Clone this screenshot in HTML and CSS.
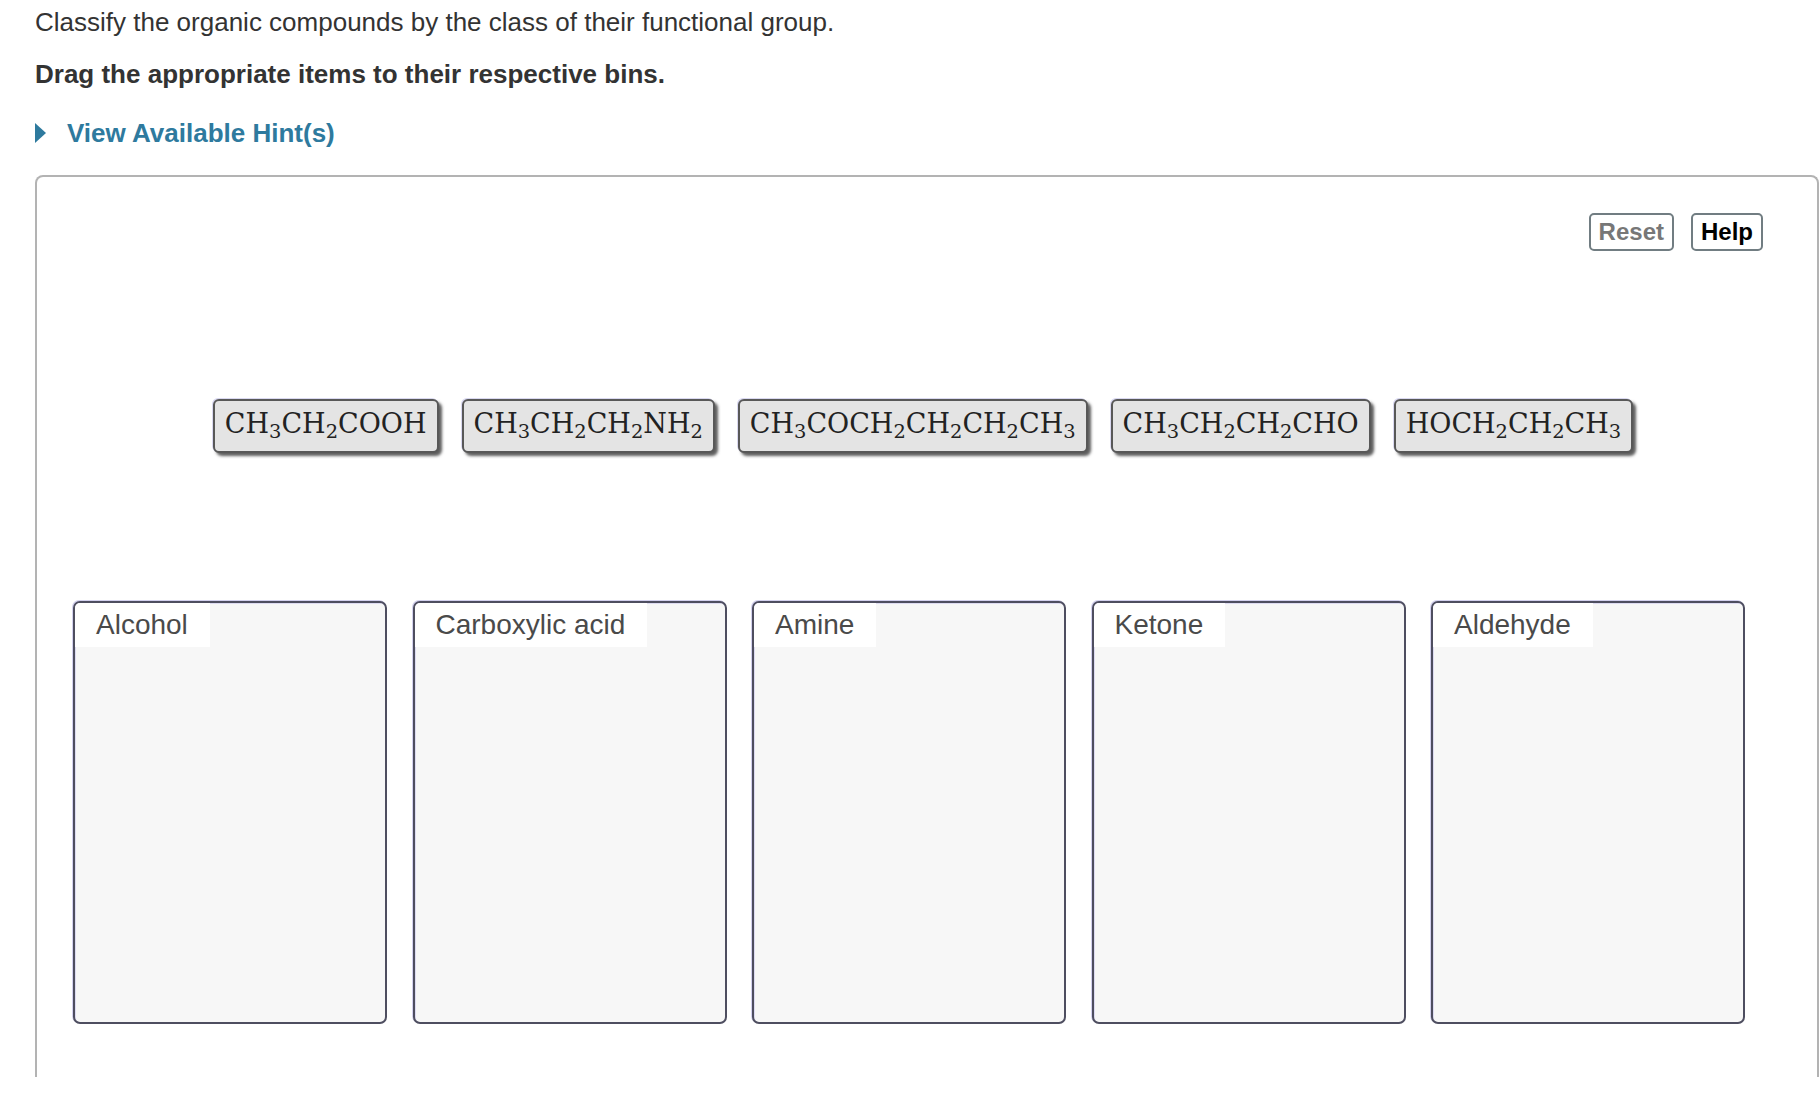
FILE: index.html
```html
<!DOCTYPE html>
<html lang="en">
<head>
  <meta charset="UTF-8" />
  <title>Classify the organic compounds</title>
  <link rel="stylesheet" href="styles.css">
</head>
<body>
  <div class="question">
    <p class="prompt">Classify the organic compounds by the class of their functional group.</p>
    <p class="instruction">Drag the appropriate items to their respective bins.</p>
    <a class="hint" href="#"><span class="arrow"></span>View Available Hint(s)</a>
  </div>

  <div class="board">
    <div class="toolbar">
      <button class="tool reset">Reset</button>
      <button class="tool help">Help</button>
    </div>

    <div class="items">
      <div class="item">CH<sub>3</sub>CH<sub>2</sub>COOH</div>
      <div class="item">CH<sub>3</sub>CH<sub>2</sub>CH<sub>2</sub>NH<sub>2</sub></div>
      <div class="item">CH<sub>3</sub>COCH<sub>2</sub>CH<sub>2</sub>CH<sub>2</sub>CH<sub>3</sub></div>
      <div class="item">CH<sub>3</sub>CH<sub>2</sub>CH<sub>2</sub>CHO</div>
      <div class="item">HOCH<sub>2</sub>CH<sub>2</sub>CH<sub>3</sub></div>
    </div>

    <div class="bins">
      <div class="bin"><span class="bin-label">Alcohol</span></div>
      <div class="bin"><span class="bin-label">Carboxylic acid</span></div>
      <div class="bin"><span class="bin-label">Amine</span></div>
      <div class="bin"><span class="bin-label">Ketone</span></div>
      <div class="bin"><span class="bin-label">Aldehyde</span></div>
    </div>
  </div>
</body>
</html>
```

FILE: styles.css
```css
body {
  font-family: "Liberation Sans", Arial, Helvetica, sans-serif;
  color: #333;
  background: #fff;
  margin: 0;
  padding: 7px 0 0 0;
}

.question {
  padding-left: 35px;
}

.prompt,
.instruction {
  margin: 0;
  font-size: 26px;
  line-height: 30px;
}

.instruction {
  margin-top: 22px;
  font-weight: bold;
}

.hint {
  display: flex;
  align-items: center;
  margin-top: 29px;
  height: 30px;
  font-size: 26px;
  font-weight: bold;
  color: #2e7a9e;
  text-decoration: none;
}

.hint .arrow {
  width: 0;
  height: 0;
  border-top: 10px solid transparent;
  border-bottom: 10px solid transparent;
  border-left: 11px solid #2e7a9e;
  margin-right: 21px;
}

.board {
  margin: 27px 1px 0 35px;
  height: 900px;
  border: 2px solid #b3b3b3;
  border-bottom: none;
  border-radius: 8px 8px 0 0;
}

.toolbar {
  display: flex;
  justify-content: flex-end;
  gap: 17px;
  padding: 36px 54px 0 0;
}

.tool {
  height: 38px;
  padding: 0 8px;
  font-family: "Liberation Sans", Arial, sans-serif;
  font-size: 24px;
  font-weight: bold;
  background: #fff;
  border: 2px solid #717d82;
  border-radius: 5px;
}

.reset {
  color: #777;
}

.help {
  color: #000;
  padding: 0 8px;
}

.items {
  display: flex;
  justify-content: center;
  gap: 23px;
  margin-top: 148px;
  padding-right: 8px;
}

.item {
  height: 50px;
  line-height: 46px;
  padding: 0 10px;
  font-family: "DejaVu Serif", "Liberation Serif", serif;
  font-size: 27px;
  color: #222;
  background: #e4e4e4;
  border: 2px solid #585858;
  border-radius: 6px;
  box-shadow: 3px 3px 3px rgba(40, 40, 40, 0.75), -1px -1px 0 #d9d8f0;
}

.item sub {
  font-size: 72%;
  vertical-align: -0.25em;
  line-height: 0;
}

.bins {
  display: grid;
  grid-template-columns: repeat(5, 314px);
  column-gap: 25.5px;
  margin-top: 148px;
  padding-left: 36px;
}

.bin {
  height: 419px;
  background: #f7f7f7;
  border: 2px solid #4e4e60;
  border-radius: 7px;
  box-shadow: -1px -1px 0 #d3d1ee, inset 1px 1px 0 #dedcf2;
}

.bin-label {
  display: inline-block;
  height: 44px;
  line-height: 44px;
  padding: 0 22px 0 21px;
  font-size: 28px;
  color: #4a4a4a;
  background: #fff;
  border-top-left-radius: 5px;
}
```
